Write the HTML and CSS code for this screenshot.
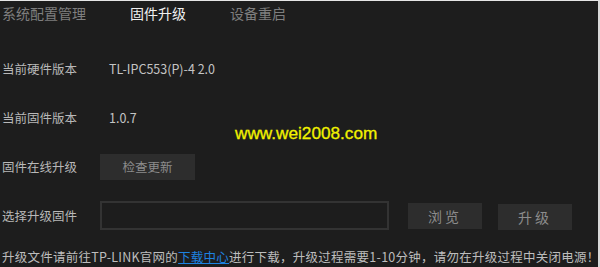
FILE: index.html
```html
<!DOCTYPE html>
<html lang="zh-CN">
<head>
    <meta charset="UTF-8">
    <title>固件升级</title>
    <link rel="stylesheet" href="styles.css">
</head>
<body>
    <div class="page">
        <div class="tabs">
            <span class="tab">系统配置管理</span>
            <span class="tab active">固件升级</span>
            <span class="tab">设备重启</span>
        </div>

        <div class="form">
            <div class="row">
                <span class="label">当前硬件版本</span>
                <span class="value">TL-IPC553(P)-4 2.0</span>
            </div>
            <div class="row">
                <span class="label">当前固件版本</span>
                <span class="value">1.0.7</span>
            </div>
            <div class="row">
                <span class="label">固件在线升级</span>
                <button class="btn btn-check">检查更新</button>
            </div>
            <div class="row">
                <span class="label">选择升级固件</span>
                <input type="text" class="file-path">
                <button class="btn btn-browse">浏览</button>
                <button class="btn btn-upgrade">升级</button>
            </div>
        </div>

        <p class="notice">升级文件请前往TP-LINK官网的<a href="#">下载中心</a>进行下载，升级过程需要1-10分钟，请勿在升级过程中关闭电源！</p>

        <div class="watermark">www.wei2008.com</div>
    </div>
</body>
</html>
```

FILE: styles.css
```css
html, body {
    margin: 0;
    padding: 0;
    height: 100%;
}

body {
    background-color: #1d1d1d;
    font-family: "Noto Sans CJK SC", "Liberation Sans", sans-serif;
    border-top: 1px solid #e6e6e6;
    border-right: 2px solid #d8d8d8;
    box-sizing: border-box;
    overflow: hidden;
}

.page {
    position: relative;
    padding-left: 2px;
}

/* tabs */
.tabs {
    display: flex;
    gap: 44px;
    height: 24px;
    align-items: center;
}

.tab {
    font-size: 14px;
    color: #7f7f7f;
    line-height: 24px;
}

.tab.active {
    color: #f0f0f0;
}

/* form rows */
.form {
    padding-top: 19px;
}

.row {
    display: flex;
    align-items: center;
    height: 49px;
}

.label {
    width: 98px;
    font-size: 12.5px;
    color: #b8b8b8;
}

.value {
    padding-left: 9px;
    font-size: 12.5px;
    color: #c4c4c4;
}

.btn {
    height: 26px;
    border: none;
    background-color: #2d2d2d;
    color: #8c8c8c;
    font-family: inherit;
    font-size: 12.5px;
    padding: 0;
    cursor: pointer;
}

.btn-check {
    width: 95px;
}

.file-path {
    width: 289px;
    height: 29px;
    box-sizing: border-box;
    background: transparent;
    border: 2px solid #333;
    margin: 0;
}

.btn-browse {
    width: 74px;
    margin-left: 19px;
    font-size: 14px;
    letter-spacing: 3px;
}

.btn-upgrade {
    width: 74px;
    margin-left: 16px;
    margin-top: 2px;
    font-size: 14px;
    letter-spacing: 3px;
}

.notice {
    margin: 8px 0 0;
    font-size: 12.5px;
    letter-spacing: 0.25px;
    color: #bdbdbd;
    white-space: nowrap;
    line-height: 17px;
}

.notice a {
    color: #1d82e0;
}

.watermark {
    position: absolute;
    left: 235px;
    top: 122px;
    font-family: "Liberation Sans", sans-serif;
    font-size: 17.2px;
    color: #f2f200;
    -webkit-text-stroke: 0.3px #f2f200;
}
```
